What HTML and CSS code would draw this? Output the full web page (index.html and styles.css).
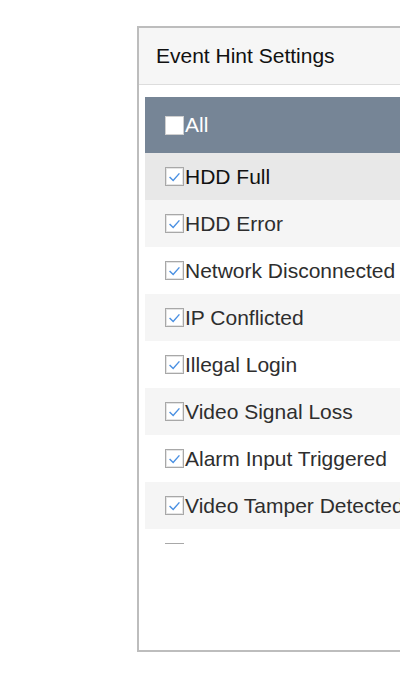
FILE: index.html
```html
<!DOCTYPE html>
<html>
<head>
<meta charset="utf-8">
<link rel="stylesheet" href="styles.css">
</head>
<body>
<div class="panel">
  <div class="panel-header">Event Hint Settings</div>
  <div class="panel-body">
    <div class="list">
      <div class="list-head">
        <span class="cb cb-empty"></span><span class="label">All</span>
      </div>
      <div class="row row-active"><span class="cb"><svg viewBox="0 0 19 19"><path d="M4 10 L8 14 L15 6"/></svg></span><span class="label">HDD Full</span></div>
      <div class="row row-alt"><span class="cb"><svg viewBox="0 0 19 19"><path d="M4 10 L8 14 L15 6"/></svg></span><span class="label">HDD Error</span></div>
      <div class="row"><span class="cb"><svg viewBox="0 0 19 19"><path d="M4 10 L8 14 L15 6"/></svg></span><span class="label">Network Disconnected</span></div>
      <div class="row row-alt"><span class="cb"><svg viewBox="0 0 19 19"><path d="M4 10 L8 14 L15 6"/></svg></span><span class="label">IP Conflicted</span></div>
      <div class="row"><span class="cb"><svg viewBox="0 0 19 19"><path d="M4 10 L8 14 L15 6"/></svg></span><span class="label">Illegal Login</span></div>
      <div class="row row-alt"><span class="cb"><svg viewBox="0 0 19 19"><path d="M4 10 L8 14 L15 6"/></svg></span><span class="label">Video Signal Loss</span></div>
      <div class="row"><span class="cb"><svg viewBox="0 0 19 19"><path d="M4 10 L8 14 L15 6"/></svg></span><span class="label">Alarm Input Triggered</span></div>
      <div class="row row-alt"><span class="cb"><svg viewBox="0 0 19 19"><path d="M4 10 L8 14 L15 6"/></svg></span><span class="label">Video Tamper Detected</span></div>
      <div class="row"><span class="cb"><svg viewBox="0 0 19 19"><path d="M4 10 L8 14 L15 6"/></svg></span></div>
    </div>
  </div>
</div>
</body>
</html>
```

FILE: styles.css
```css
html, body {
  margin: 0;
  padding: 0;
  background: #ffffff;
  overflow: hidden;
}
body {
  width: 400px;
  height: 700px;
  font-family: "Liberation Sans", Arial, sans-serif;
}
.panel {
  margin-top: 26px;
  margin-left: 137px;
  width: 340px;
  height: 622px;
  border: 2px solid #bdbdbd;
  background: #ffffff;
  display: flex;
  flex-direction: column;
}
.panel-header {
  height: 56px;
  flex: none;
  background: #f6f6f6;
  border-bottom: 1px solid #dddddd;
  display: flex;
  align-items: center;
  padding-left: 17px;
  font-size: 21px;
  color: #111111;
}
.panel-body {
  padding: 12px 0 0 6px;
}
.list {
  height: 447px;
  overflow: hidden;
}
.list-head {
  height: 56px;
  background: #768596;
  display: flex;
  align-items: center;
  padding-left: 20px;
  color: #ffffff;
  font-size: 21px;
}
.row {
  height: 47px;
  display: flex;
  align-items: center;
  padding-left: 20px;
  font-size: 21px;
  color: #2e2e2e;
  background: #ffffff;
  white-space: nowrap;
}
.row-alt {
  background: #f5f5f5;
}
.row-active {
  background: #e8e8e8;
  color: #111111;
}
.cb {
  width: 17px;
  height: 17px;
  border: 1px solid #a8a8a8;
  background: #ffffff;
  box-shadow: inset 0 0 0 1px #e4e4e4;
  display: inline-flex;
  flex: none;
}
.cb svg {
  width: 17px;
  height: 17px;
}
.cb path {
  fill: none;
  stroke: #4a90e2;
  stroke-width: 1.6;
}
.cb-empty {
  border: 1px solid #cfcfcf;
  box-shadow: inset 0 0 0 1px #ffffff;
}
.label {
  margin-left: 1px;
}
```
